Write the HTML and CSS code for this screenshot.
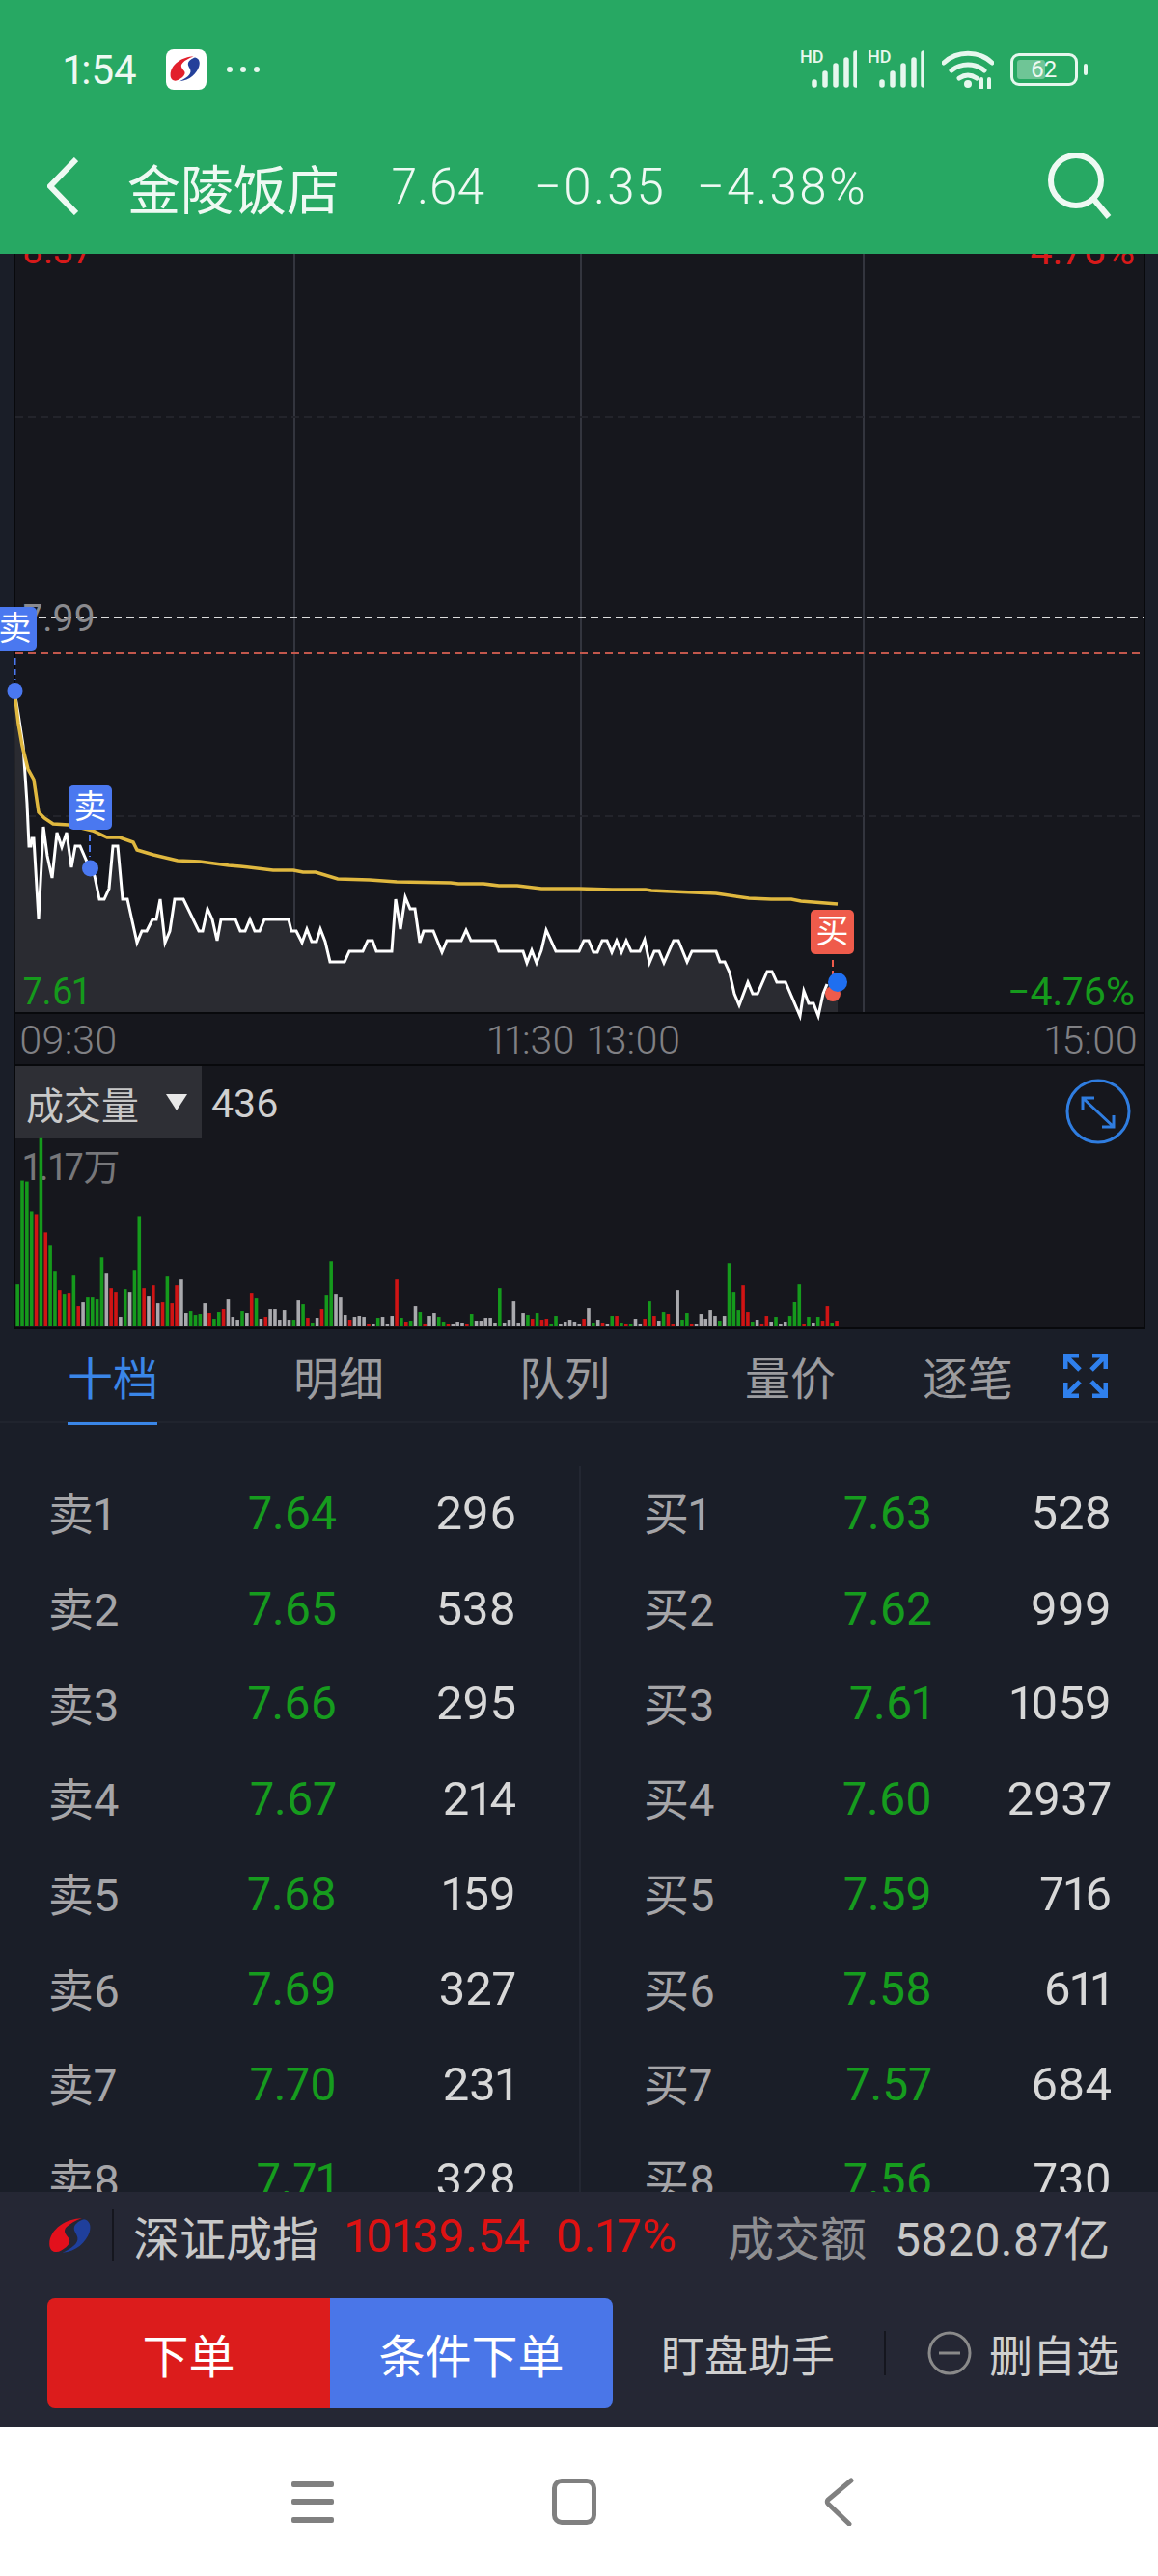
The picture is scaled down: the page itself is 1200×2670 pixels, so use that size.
FILE: index.html
```html
<!DOCTYPE html>
<html lang="zh-CN">

<head>
    <meta charset="UTF-8">
    <meta name="viewport" content="width=device-width, initial-scale=1.0">
    <title>金陵饭店</title>
    <link rel="stylesheet" href="styles.css">
</head>

<body>
    <header class="top">
        <div class="status-bar">
            <span class="clock">1:54</span>
            <svg class="app-badge" viewBox="0 0 42 42">
                <rect width="42" height="42" rx="8" fill="#fff" />
                <g transform="translate(3 6) scale(.8)">
                    <path d="M32 2C18 2 2 12 2 26c0 7 6 9 11 6 7-4 9-8 7-11-3-4-6-7-2-11 3-3 8-6 14-8z" fill="#e2202c" />
                    <path d="M34 3c5 1 7 6 5 12-3 9-12 18-25 19 8-4 15-8 14-14-1-4-4-6-3-10 1-3 5-6 9-7z" fill="#24409a" />
                </g>
            </svg>
            <span class="dots"><i></i><i></i><i></i></span>
            <div class="sys-icons">
                <span class="signal">
                    <b>HD</b>
                    <svg width="50" height="40" viewBox="0 0 50 40"><path d="M6 36v-3M17 36V24M28 36V16M39 36V10M49 36V3" /></svg>
                </span>
                <span class="signal">
                    <b>HD</b>
                    <svg width="50" height="40" viewBox="0 0 50 40"><path d="M6 36v-3M17 36V24M28 36V16M39 36V10M49 36V3" /></svg>
                </span>
                <svg class="wifi" width="54" height="40" viewBox="0 0 54 40">
                    <path d="M2 13C16 0 38 0 52 13M10 21c10-8 24-8 34 0M18 29c6-4 12-4 18 0" />
                    <circle cx="27" cy="35" r="4" />
                    <path class="wifi-arrows" d="M41 30v9M49 30v9" />
                </svg>
                <span class="battery"><i></i><em>62</em></span>
                <span class="battery-tip"></span>
            </div>
        </div>
        <div class="title-bar">
            <svg class="back" width="32" height="60" viewBox="0 0 32 60"><path d="M30 2L3 30l27 28" /></svg>
            <span class="stock-name">金陵饭店</span>
            <span class="quote quote-price">7.64</span>
            <span class="quote quote-change">−0.35</span>
            <span class="quote quote-pct">−4.38%</span>
            <svg class="search" width="68" height="68" viewBox="0 0 68 68">
                <circle cx="31" cy="28" r="26" />
                <path d="M50 48l15 18" />
            </svg>
        </div>
    </header>

    <section class="chart">
        <svg id="price-plot" class="plot" viewBox="14 263 1173 786"></svg>
        <span class="axis-label label-high">8.37</span>
        <span class="axis-label label-high-pct">4.76%</span>
        <span class="axis-label label-pre">7.99</span>
        <span class="axis-label label-low">7.61</span>
        <span class="axis-label label-low-pct">−4.76%</span>
        <span class="trade-tag sell tag-a">卖</span>
        <span class="trade-tag sell tag-b">卖</span>
        <span class="trade-tag buy tag-c">买</span>
    </section>

    <div class="time-axis">
        <span>09:30</span>
        <span class="time-mid"><span>11:30</span><span>13:00</span></span>
        <span>15:00</span>
    </div>

    <section class="volume">
        <div class="vol-select">
            <span>成交量</span>
            <i class="caret"></i>
        </div>
        <span class="vol-now">436</span>
        <span class="vol-max">1.17万</span>
        <svg id="volume-plot" class="plot" viewBox="14 1105 1173 271"></svg>
        <svg class="expand" width="68" height="68" viewBox="0 0 68 68">
            <circle cx="34" cy="34" r="32" />
            <path d="M18 32V20h12M18 20l32 30M50 38v12H38" />
        </svg>
    </section>

    <nav class="tabs">
        <span class="tab active">十档</span>
        <span class="tab">明细</span>
        <span class="tab">队列</span>
        <span class="tab">量价</span>
        <span class="tab tab-last">逐笔</span>
        <svg class="fullscreen" width="46" height="46" viewBox="0 0 46 46">
            <path d="M2 16V2h14M2 2l15 15M44 16V2H30M44 2L29 17M2 30v14h14M2 44l15-15M44 30v14H30M44 44L29 29" />
        </svg>
    </nav>

    <section class="book">
        <div class="side">
            <div class="row"><span class="lvl">卖1</span><span class="px">7.64</span><span class="qty">296</span></div>
            <div class="row"><span class="lvl">卖2</span><span class="px">7.65</span><span class="qty">538</span></div>
            <div class="row"><span class="lvl">卖3</span><span class="px">7.66</span><span class="qty">295</span></div>
            <div class="row"><span class="lvl">卖4</span><span class="px">7.67</span><span class="qty">214</span></div>
            <div class="row"><span class="lvl">卖5</span><span class="px">7.68</span><span class="qty">159</span></div>
            <div class="row"><span class="lvl">卖6</span><span class="px">7.69</span><span class="qty">327</span></div>
            <div class="row"><span class="lvl">卖7</span><span class="px">7.70</span><span class="qty">231</span></div>
            <div class="row"><span class="lvl">卖8</span><span class="px">7.71</span><span class="qty">328</span></div>
        </div>
        <div class="side side-buy">
            <div class="row"><span class="lvl">买1</span><span class="px">7.63</span><span class="qty">528</span></div>
            <div class="row"><span class="lvl">买2</span><span class="px">7.62</span><span class="qty">999</span></div>
            <div class="row"><span class="lvl">买3</span><span class="px">7.61</span><span class="qty">1059</span></div>
            <div class="row"><span class="lvl">买4</span><span class="px">7.60</span><span class="qty">2937</span></div>
            <div class="row"><span class="lvl">买5</span><span class="px">7.59</span><span class="qty">716</span></div>
            <div class="row"><span class="lvl">买6</span><span class="px">7.58</span><span class="qty">611</span></div>
            <div class="row"><span class="lvl">买7</span><span class="px">7.57</span><span class="qty">684</span></div>
            <div class="row"><span class="lvl">买8</span><span class="px">7.56</span><span class="qty">730</span></div>
        </div>
    </section>

    <footer class="dock">
        <div class="ticker">
            <svg class="ticker-logo" width="47" height="40" viewBox="0 0 42 36" preserveAspectRatio="none">
                <path d="M32 2C18 2 2 12 2 26c0 7 6 9 11 6 7-4 9-8 7-11-3-4-6-7-2-11 3-3 8-6 14-8z" fill="#e3101c" />
                <path d="M34 3c5 1 7 6 5 12-3 9-12 18-25 19 8-4 15-8 14-14-1-4-4-6-3-10 1-3 5-6 9-7z" fill="#1f3f9c" />
            </svg>
            <span class="ticker-name">深证成指</span>
            <span class="ticker-up">10139.54</span>
            <span class="ticker-up ticker-pct">0.17%</span>
            <span class="ticker-turnover">成交额</span>
            <span class="ticker-amount">5820.87亿</span>
        </div>
        <div class="actions">
            <button class="btn btn-order">下单</button>
            <button class="btn btn-cond">条件下单</button>
            <span class="action-text">盯盘助手</span>
            <span class="action-sep"></span>
            <svg class="minus" width="46" height="46" viewBox="0 0 46 46">
                <circle cx="23" cy="23" r="21" />
                <path d="M12 23h22" />
            </svg>
            <span class="action-text">删自选</span>
        </div>
    </footer>

    <div class="nav-bar">
        <span class="nav-menu"><i></i><i></i><i></i></span>
        <span class="nav-home"></span>
        <svg class="nav-back" width="34" height="50" viewBox="0 0 34 50"><path d="M30 3L6 23c-1 1-1 3 0 4l22 21" /></svg>
    </div>

    <script src="chart.js"></script>
</body>

</html>
```

FILE: styles.css
```css
/* Overall page */

* {
    box-sizing: border-box;
}

body {
    width: 1200px;
    height: 2670px;
    margin: 0;
    overflow: hidden;
    display: flex;
    flex-direction: column;
    background-color: #1a1e28;
    font-family: Roboto, "Noto Sans CJK SC", sans-serif;
    font-variant-numeric: proportional-nums;
    color: #d8d8d8;
}

/* Green header */

.top {
    position: relative;
    z-index: 2;
    height: 263px;
    flex: none;
    background-color: #27a863;
    color: #eef9f3;
}

.status-bar {
    height: 144px;
    display: flex;
    align-items: center;
    padding-left: 66px;
}

.clock {
    font-size: 42px;
    width: 106px;
}

.app-badge {
    width: 42px;
    height: 42px;
}

.dots {
    display: flex;
    gap: 8px;
    margin-left: 21px;
}

.dots i {
    width: 6px;
    height: 6px;
    border-radius: 50%;
    background-color: #e6f7ee;
}

.sys-icons {
    margin-left: auto;
    margin-right: 73px;
    display: flex;
    align-items: center;
}

.signal {
    position: relative;
    width: 70px;
    height: 40px;
    display: block;
}

.signal b {
    position: absolute;
    left: -5px;
    top: -4px;
    font-size: 18px;
    font-weight: 500;
    color: #e6f7ee;
}

.signal svg {
    position: absolute;
    left: 4px;
    top: 0;
    fill: none;
    stroke: #e6f7ee;
    stroke-width: 5.5;
    stroke-linecap: round;
}

.wifi {
    margin-left: 2px;
    fill: none;
    stroke: #e6f7ee;
    stroke-width: 5;
    stroke-linecap: round;
}

.wifi circle {
    fill: #e6f7ee;
    stroke: none;
}

.wifi-arrows {
    stroke-width: 4;
}

.battery {
    position: relative;
    width: 70px;
    height: 34px;
    margin-left: 17px;
    border: 3px solid #e6f7ee;
    border-radius: 9px;
    display: block;
}

.battery i {
    position: absolute;
    left: 4px;
    top: 4px;
    width: 29px;
    height: 20px;
    border-radius: 3px;
    background-color: #6fc596;
}

.battery em {
    position: absolute;
    left: 18px;
    top: -1px;
    font-style: normal;
    font-size: 24px;
    line-height: 30px;
}

.battery-tip {
    width: 4px;
    height: 12px;
    margin-left: 6px;
    border-radius: 2px;
    background-color: #e6f7ee;
}

.title-bar {
    height: 98px;
    display: flex;
    align-items: center;
    padding-left: 49px;
    padding-right: 48px;
}

.back {
    fill: none;
    stroke: #eef9f3;
    stroke-width: 6;
}

.stock-name {
    margin-left: 51px;
    font-size: 55px;
    width: 220px;
}

.quote {
    font-size: 51px;
    font-weight: 300;
}

.quote-price {
    margin-left: 54px;
    letter-spacing: 0.5px;
}

.quote-change {
    margin-left: 50px;
    letter-spacing: 2px;
}

.quote-pct {
    margin-left: 32px;
    letter-spacing: 2px;
}

.search {
    margin-left: auto;
    fill: none;
    stroke: #eef9f3;
    stroke-width: 6;
}

/* Price chart */

.chart {
    position: relative;
    height: 786px;
    flex: none;
    margin: 0 13px 0 14px;
    background-color: #16171d;
    border-left: 2px solid #08090c;
    border-right: 2px solid #08090c;
}

.plot {
    position: absolute;
    left: -2px;
    top: 0;
    width: 1173px;
    height: 100%;
    overflow: visible;
}

.axis-label {
    position: absolute;
    font-size: 38px;
    line-height: 44px;
}

.label-high {
    left: 7px;
    top: -25px;
    color: #d81a1a;
}

.label-high-pct {
    right: 9px;
    top: -25px;
    font-size: 41px;
    color: #d81a1a;
}

.label-pre {
    left: 8px;
    top: 356px;
    font-size: 39px;
    color: #8a8a8e;
}

.label-low {
    left: 8px;
    top: 743px;
    color: #159a1c;
}

.label-low-pct {
    right: 9px;
    top: 743px;
    font-size: 41px;
    color: #159a1c;
}

.trade-tag {
    position: absolute;
    width: 45px;
    height: 46px;
    border-radius: 5px;
    font-size: 34px;
    line-height: 44px;
    text-align: center;
    color: #fff;
}

.sell {
    background-color: #4a78f0;
}

.buy {
    background-color: #ef5b4b;
}

.tag-a {
    left: -23px;
    top: 366px;
}

.tag-b {
    left: 55px;
    top: 551px;
}

.tag-c {
    left: 824px;
    top: 680px;
}

/* Time axis */

.time-axis {
    height: 56px;
    flex: none;
    margin: 0 13px 0 14px;
    padding: 2px 6px 0 4px;
    display: flex;
    justify-content: space-between;
    align-items: center;
    background-color: #16171d;
    border-top: 2px solid #08090c;
    border-bottom: 2px solid #08090c;
    border-left: 2px solid #08090c;
    border-right: 2px solid #08090c;
    font-size: 41px;
    font-weight: 300;
    color: #808084;
}

.time-mid {
    display: flex;
    gap: 13px;
    margin-left: 6px;
}

/* Volume chart */

.volume {
    position: relative;
    height: 273px;
    flex: none;
    margin: 0 13px 0 14px;
    display: flex;
    align-items: flex-start;
    background-color: #16171d;
    border-left: 2px solid #08090c;
    border-right: 2px solid #08090c;
    border-bottom: 3px solid #08090c;
}

.vol-select {
    width: 193px;
    height: 75px;
    display: flex;
    align-items: center;
    padding-left: 11px;
    background-color: #2e2f35;
    font-size: 39px;
    color: #c8c8c8;
}

.caret {
    width: 0;
    height: 0;
    margin-left: 28px;
    border-left: 11px solid transparent;
    border-right: 11px solid transparent;
    border-top: 17px solid #e8e8e8;
}

.vol-now {
    margin-left: 10px;
    font-size: 41px;
    line-height: 79px;
    color: #d0d0d0;
}

.vol-max {
    position: absolute;
    left: 8px;
    top: 74px;
    font-size: 38px;
    color: #77777a;
}

.expand {
    position: absolute;
    right: 13px;
    top: 13px;
    fill: none;
    stroke: #2f7de0;
    stroke-width: 3;
}

/* Tabs */

.tabs {
    height: 97px;
    flex: none;
    display: flex;
    align-items: center;
    border-bottom: 2px solid #20242e;
    font-size: 47px;
    color: #9c9c9f;
}

.tab {
    position: relative;
    width: 234px;
    text-align: center;
}

.tab-last {
    width: 134px;
}

.tab.active {
    color: #3a86e8;
}

.tab.active::after {
    content: "";
    position: absolute;
    left: 70px;
    bottom: -17px;
    width: 93px;
    height: 3px;
    background-color: #3a86e8;
}

.fullscreen {
    margin-left: 32px;
    fill: none;
    stroke: #2f80ed;
    stroke-width: 5;
}

/* Order book */

.book {
    height: 797px;
    flex: none;
    display: grid;
    grid-template-columns: 600px 600px;
    overflow: hidden;
}

.side {
    margin-top: 44px;
    padding-left: 50px;
}

.side-buy {
    padding-left: 65px;
    border-left: 2px solid #232732;
}

.row {
    display: grid;
    grid-template-columns: 151px 148px 186px;
    height: 98.7px;
    align-items: center;
    font-size: 49px;
}

.lvl {
    font-size: 47px;
    margin-top: -5px;
    color: #a5a5a8;
}

.px {
    text-align: right;
    font-size: 48px;
    color: #169c1e;
}

.qty {
    text-align: right;
    color: #d8d8d8;
}

/* Bottom dock */

.dock {
    height: 244px;
    flex: none;
    padding: 0 0 0 49px;
    background-color: #252734;
}

.ticker {
    height: 90px;
    display: flex;
    align-items: center;
    font-size: 48px;
}

.ticker-logo {
    flex: none;
}

.ticker-name {
    margin-left: 42px;
    color: #c8c8c8;
    position: relative;
}

.ticker-name::before {
    content: "";
    position: absolute;
    left: -22px;
    top: 8px;
    bottom: 8px;
    width: 2px;
    background-color: #15161e;
}

.ticker-up {
    margin-left: 28px;
    color: #de1212;
}

.ticker-pct {
    margin-left: 27px;
    letter-spacing: 0.5px;
    font-size: 49px;
}

.ticker-turnover {
    margin-left: 52px;
    color: #8f8f92;
}

.ticker-amount {
    margin-left: 29px;
    color: #c8c8c8;
    white-space: nowrap;
}

.actions {
    height: 114px;
    margin-top: 20px;
    display: flex;
    align-items: center;
}

.btn {
    flex: none;
    width: 293px;
    height: 114px;
    border: none;
    padding: 0;
    color: #fff;
    font-family: inherit;
    font-size: 48px;
}

.btn-order {
    background-color: #dc1c1c;
    border-radius: 8px 0 0 8px;
}

.btn-cond {
    background-color: #4a76e8;
    border-radius: 0 8px 8px 0;
}

.action-text {
    flex: none;
    font-size: 45px;
    color: #cfcfcf;
}

.btn-cond + .action-text {
    margin-left: 50px;
}

.action-sep {
    flex: none;
    width: 2px;
    height: 46px;
    margin: 0 43px 0 51px;
    background-color: #15161e;
}

.minus {
    flex: none;
    margin-right: 18px;
    fill: none;
    stroke: #8a8a8a;
    stroke-width: 3;
}

/* Android nav bar */

.nav-bar {
    flex: 1;
    position: relative;
    background-color: #fff;
    display: flex;
    align-items: center;
}

.nav-menu {
    margin-left: 302px;
    width: 44px;
    display: flex;
    flex-direction: column;
    gap: 12.5px;
}

.nav-menu i {
    height: 6px;
    border-radius: 2px;
    background-color: #808080;
}

.nav-home {
    width: 46px;
    height: 48px;
    margin-left: 226px;
    border: 5px solid #808080;
    border-radius: 10px;
}

.nav-back {
    margin-left: 234px;
    fill: none;
    stroke: #808080;
    stroke-width: 5;
    stroke-linecap: round;
}
```

FILE: chart.js
```js
// Coordinates below are page pixels: the svg viewBoxes start at the panel's top-left
const NS = 'http://www.w3.org/2000/svg';

const pricePoints = [
    [15,717],[19,740],[24,773],[28,833],[30,877],[32,877],[33,869],[35,869],[40,953],[45,857],
    [49,887],[54,910],[59,863],[64,878],[69,863],[74,899],[78,877],[83,877],[93,900],[98,908],
    [103,932],[108,932],[113,921],[117,877],[122,877],[127,932],[132,932],[142,977],[147,965],[152,965],
    [158,953],[162,953],[166,932],[171,977],[176,965],[181,932],[190,932],[206,965],[210,965],[215,942],
    [220,953],[225,975],[229,953],[244,953],[249,965],[254,965],[259,953],[264,965],[269,965],[274,953],
    [299,953],[302,965],[307,965],[313,977],[318,963],[323,976],[328,976],[332,963],[337,976],[342,997],
    [357,997],[362,986],[376,986],[381,975],[386,975],[390,986],[406,986],[410,932],[415,963],[420,930],
    [425,942],[430,942],[435,977],[439,965],[449,965],[458,987],[463,975],[478,975],[483,964],[488,975],
    [513,975],[517,986],[542,986],[546,998],[551,985],[556,998],[561,985],[566,964],[576,986],[600,986],
    [605,975],[610,975],[615,987],[619,987],[624,975],[629,975],[634,987],[639,975],[644,987],[649,975],
    [654,986],[663,986],[668,974],[673,998],[678,986],[683,986],[688,998],[698,975],[703,975],[712,997],
    [717,986],[742,986],[746,997],[751,997],[756,1008],[761,1030],[766,1042],[775,1018],[780,1030],[785,1030],
    [795,1007],[800,1007],[805,1018],[814,1018],[829,1053],[833,1027],[838,1040],[843,1040],[848,1053],[853,1030],
    [857,1020]
];

const avgPoints = [
    [15,717],[19,750],[23,773],[29,797],[35,808],[40,842],[46,848],[55,854],[71,855],[96,861],
    [111,868],[124,868],[138,873],[142,881],[159,886],[184,892],[207,893],[237,897],[249,898],[283,902],
    [304,902],[314,904],[327,904],[350,911],[383,912],[411,914],[467,915],[475,916],[501,916],[517,918],
    [536,918],[561,921],[600,921],[634,922],[669,922],[675,923],[696,924],[719,925],[742,926],[776,931],
    [799,932],[820,932],[830,934],[868,937]
];

// one entry per bar: colour letter + height
const volumes = ('g43 g151 g150 g119 r116 g195 r97 g84 g57 r37 g33 r34 g52 r20 w24 g30 g30 g28 g71 w55 ' +
    'r39 r35 w9 g38 w35 g58 g114 r39 w31 r42 w23 r24 g51 r23 r42 w48 w13 g15 g11 g12 ' +
    'w23 r13 g7 g14 r17 w28 w9 w6 g15 w13 r34 g29 w7 r9 w17 w17 w6 w16 w6 g6 ' +
    'w27 g22 r8 g3 w8 r17 g32 g67 w33 w30 w11 r6 w9 w10 w9 r2 w2 g8 w9 w2 ' +
    'w10 r48 g8 r4 g5 w20 g14 r2 w10 w13 g9 g4 r2 w2 w4 w3 r2 g12 w5 w5 ' +
    'w8 w8 w3 g39 w3 w6 w26 w3 w13 g11 r7 g13 r6 r7 g2 g10 w2 w4 w6 w4 ' +
    'w2 r7 w18 g3 w6 r3 w2 g10 r10 g3 r2 g2 w7 w2 r7 g26 r10 w5 g14 r12 ' +
    'r2 w37 g6 g13 r2 w2 w12 w7 w16 w10 g5 w10 g65 g35 g16 r42 r14 g4 w6 r2 ' +
    'r10 w4 g9 w2 w4 g10 g25 g43 r2 g9 w3 g9 r5 r20 g3 r5').split(' ');

const barColors = { g: '#159a1c', r: '#d01414', w: '#a9a9ad' };

function add(parent, tag, attrs) {
    const el = document.createElementNS(NS, tag);
    for (const key in attrs) {
        el.setAttribute(key, attrs[key]);
    }
    parent.appendChild(el);
    return el;
}

function drawPrice() {
    const svg = document.getElementById('price-plot');

    // grid
    [305, 602, 895].forEach(x => {
        add(svg, 'line', { x1: x, x2: x, y1: 263, y2: 1049, stroke: '#33353e', 'stroke-width': 2 });
    });
    [432, 846].forEach(y => {
        add(svg, 'line', { x1: 16, x2: 1185, y1: y, y2: y, stroke: '#23242b', 'stroke-width': 2, 'stroke-dasharray': '8 5' });
    });
    add(svg, 'line', { x1: 40, x2: 1185, y1: 640, y2: 640, stroke: '#dcdcdc', 'stroke-width': 2, 'stroke-dasharray': '8 5' });
    add(svg, 'line', { x1: 16, x2: 1185, y1: 677, y2: 677, stroke: '#c2574c', 'stroke-width': 2, 'stroke-dasharray': '8 5' });

    // area under the price line stops at the panel floor
    const area = pricePoints.map(p => `${p[0]},${Math.min(p[1], 1049)}`).join(' ');
    add(svg, 'polygon', { points: `16,1049 ${area} 868,1020 868,1049`, fill: '#2a2b31' });
    add(svg, 'polyline', {
        points: pricePoints.join(' '), fill: 'none', stroke: '#fff', 'stroke-width': 3, 'stroke-linejoin': 'miter'
    });
    add(svg, 'polyline', { points: avgPoints.join(' '), fill: 'none', stroke: '#e0b83f', 'stroke-width': 3.5 });

    // trade markers
    add(svg, 'line', { x1: 15.5, x2: 15.5, y1: 682, y2: 705, stroke: '#4a78f0', 'stroke-width': 2, 'stroke-dasharray': '7 4' });
    add(svg, 'line', { x1: 93, x2: 93, y1: 865, y2: 888, stroke: '#4a78f0', 'stroke-width': 2, 'stroke-dasharray': '7 4' });
    add(svg, 'line', { x1: 863, x2: 863, y1: 995, y2: 1015, stroke: '#ef5b4b', 'stroke-width': 2, 'stroke-dasharray': '7 4' });
    add(svg, 'circle', { cx: 15.5, cy: 716, r: 8, fill: '#4a78f0' });
    add(svg, 'circle', { cx: 93.5, cy: 900, r: 8.5, fill: '#4a78f0' });
    add(svg, 'circle', { cx: 863, cy: 1030, r: 8, fill: '#ef5b4b' });
    add(svg, 'circle', { cx: 868, cy: 1018, r: 10, fill: '#1f6ff0' });
}

function drawVolume() {
    const svg = document.getElementById('volume-plot');
    volumes.forEach((v, i) => {
        const h = Number(v.slice(1));
        add(svg, 'rect', {
            x: 14.2 + i * 4.869, y: 1375 - h, width: 3.6, height: h, fill: barColors[v[0]]
        });
    });
}

drawPrice();
drawVolume();
```
